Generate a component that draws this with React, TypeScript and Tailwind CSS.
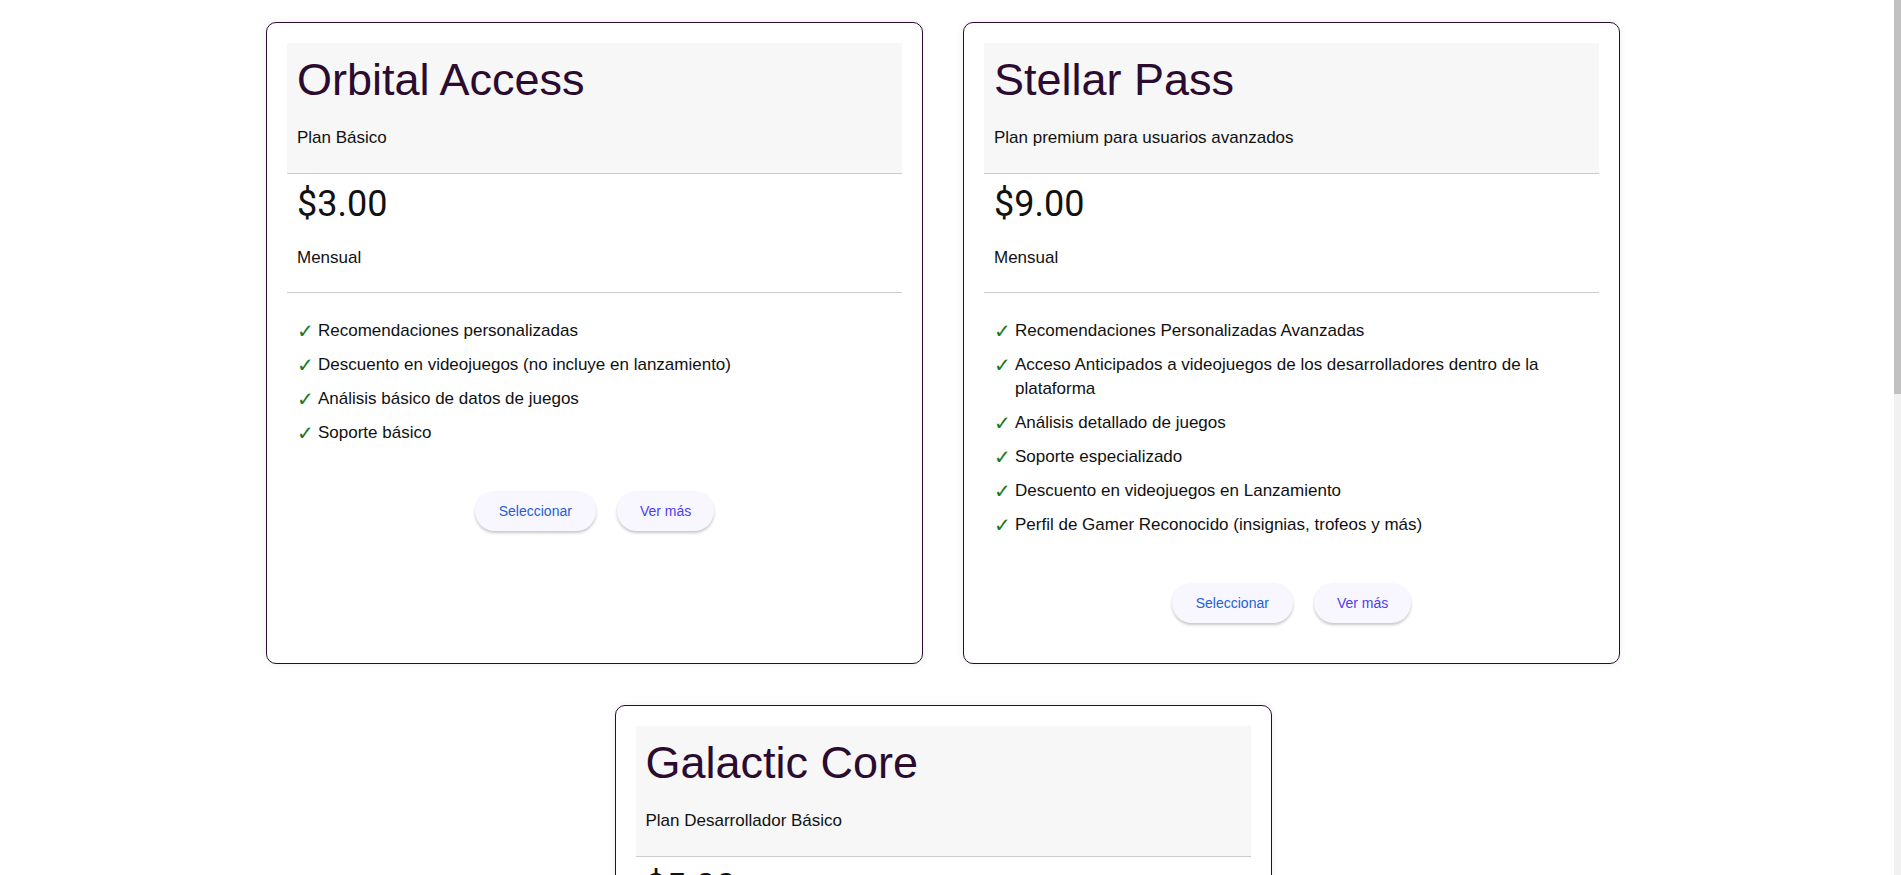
import React from 'react';

interface Plan {
  name: string;
  subtitle: string;
  price: string;
  period: string;
  features: string[];
}

const plans: Plan[] = [
  {
    name: 'Orbital Access',
    subtitle: 'Plan Básico',
    price: '$3.00',
    period: 'Mensual',
    features: [
      'Recomendaciones personalizadas',
      'Descuento en videojuegos (no incluye en lanzamiento)',
      'Análisis básico de datos de juegos',
      'Soporte básico',
    ],
  },
  {
    name: 'Stellar Pass',
    subtitle: 'Plan premium para usuarios avanzados',
    price: '$9.00',
    period: 'Mensual',
    features: [
      'Recomendaciones Personalizadas Avanzadas',
      'Acceso Anticipados a videojuegos de los desarrolladores dentro de la plataforma',
      'Análisis detallado de juegos',
      'Soporte especializado',
      'Descuento en videojuegos en Lanzamiento',
      'Perfil de Gamer Reconocido (insignias, trofeos y más)',
    ],
  },
  {
    name: 'Galactic Core',
    subtitle: 'Plan Desarrollador Básico',
    price: '$5.00',
    period: 'Mensual',
    features: [
      'Publicación de videojuegos en la plataforma',
      'Estadísticas básicas de ventas',
      'Soporte para desarrolladores',
    ],
  },
];

function PlanCard({ plan }: { plan: Plan }) {
  return (
    <div className="w-[657px] rounded-[10px] border border-[#2b0b30] bg-white p-[20px] shadow-[0_0_8px_rgba(0,0,0,0.07)]">
      {/* Header */}
      <div className="bg-[#f7f7f7] border-b border-[#cccccc] px-[10px] pt-[12px] pb-[23px]">
        <h2 className="text-[45px] leading-[50px] text-[#2b0b30] font-normal mb-[21px]">{plan.name}</h2>
        <p className="text-[17px] leading-6 text-[#111]">{plan.subtitle}</p>
      </div>

      {/* Price */}
      <div className="border-b border-[#cccccc] px-[10px] pt-[10px] pb-[22px]">
        <div className="text-[36px] leading-[41px] text-[#111] font-['Roboto',sans-serif]">{plan.price}</div>
        <p className="mt-[21px] text-[17px] leading-6 text-[#111]">{plan.period}</p>
      </div>

      {/* Features */}
      <ul className="px-[10px] pt-[26px] flex flex-col gap-[10px]">
        {plan.features.map((f) => (
          <li key={f} className="flex text-[17px] leading-6 text-[#111]">
            <span className="w-[21px] shrink-0 text-[#1b7a1b] font-bold font-['DejaVu_Sans',sans-serif] text-[20px] leading-6">✓</span>
            <span>{f}</span>
          </li>
        ))}
      </ul>

      <div className="mt-[46px] mb-[20px] flex justify-center gap-[21px]">
        <button
          type="button"
          className="h-[40px] px-[24px] rounded-full bg-[#f8f7ff] text-[14px] text-[#1d5fd6] shadow-[0_2px_3px_rgba(0,0,0,0.22)] cursor-pointer"
        >
          Seleccionar
        </button>
        <button
          type="button"
          className="h-[40px] px-[23px] rounded-full bg-[#f8f7ff] text-[14px] text-[#4c3cf5] shadow-[0_2px_3px_rgba(0,0,0,0.22)] cursor-pointer"
        >
          Ver más
        </button>
      </div>
    </div>
  );
}

export default function App() {
  return (
    <div className="min-h-screen bg-white font-['Liberation_Sans',Arial,sans-serif]">
      <div className="flex flex-wrap justify-center gap-x-[40px] gap-y-[41px] pt-[22px] pb-[40px] pr-[15px]">
        {plans.map((p) => (
          <PlanCard key={p.name} plan={p} />
        ))}
      </div>
      {/* scrollbar strip */}
      <div className="fixed right-0 top-0 h-full w-[7px] bg-[#f1f1f1]">
        <div className="h-[394px] w-full bg-[#c1c1c1]" />
      </div>
    </div>
  );
}
